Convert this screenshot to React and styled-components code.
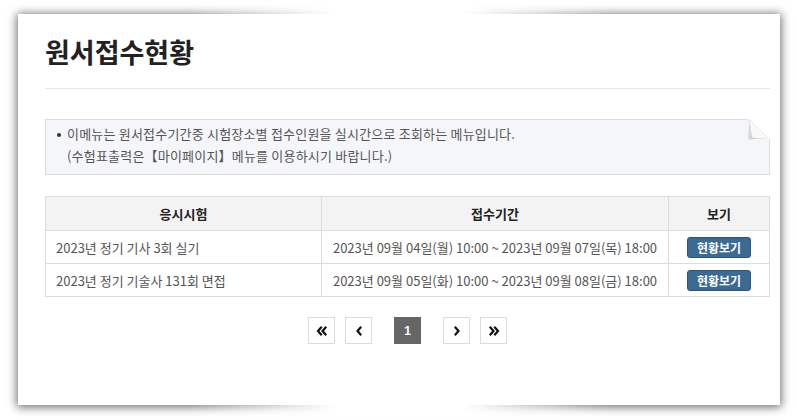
import React from "react";
import styled, { createGlobalStyle } from "styled-components";

const GlobalStyle = createGlobalStyle`
  html, body {
    margin: 0;
    padding: 0;
    background: #fff;
  }
  body {
    font-family: "Noto Sans CJK KR", "Noto Sans", sans-serif;
    color: #555;
  }
`;

const Stage = styled.div`
  width: 797px;
  height: 420px;
  box-sizing: border-box;
  padding: 14px 17px 15px 18px;
`;

const Panel = styled.div`
  position: relative;
  height: 100%;
  background: #fff;
  box-shadow: 0 1px 9px 1px rgba(0, 0, 0, 0.6);
  padding: 0 10px 0 27px;
  box-sizing: border-box;

  /* soften the shadow in the middle of the top and bottom edges */
  &::before,
  &::after {
    content: "";
    position: absolute;
    left: 22%;
    right: 22%;
    height: 14px;
    background: linear-gradient(
      to right,
      rgba(255, 255, 255, 0),
      #fff 35%,
      #fff 65%,
      rgba(255, 255, 255, 0)
    );
  }
  &::before {
    top: -14px;
  }
  &::after {
    bottom: -14px;
  }
`;

const Header = styled.div`
  padding: 22px 0 21px;
  border-bottom: 1px solid #e6e6e6;
`;

const Title = styled.h1`
  margin: 0;
  font-size: 27px;
  line-height: 31px;
  font-weight: 700;
  color: #222;
`;

const Notice = styled.div`
  position: relative;
  margin-top: 30px;
  background: #f5f6fa;
  border: 1px solid #dcdcdc;
  padding: 3px 12px 7px 11px;
  font-size: 13px;
  line-height: 22px;
  letter-spacing: 0.2px;
  color: #555;
  display: flex;
  align-items: flex-start;
  gap: 6px;
`;

const Bullet = styled.span`
  flex: none;
  width: 4px;
  height: 4px;
  margin-top: 10px;
  border-radius: 50%;
  background: #333;
`;

const Fold = styled.svg`
  position: absolute;
  top: -1px;
  right: -1px;
  width: 22px;
  height: 22px;
`;

const Table = styled.table`
  margin-top: 21px;
  width: 100%;
  border-collapse: collapse;
  font-size: 13px;
`;

const Th = styled.th`
  height: 33px;
  background: #f3f3f3;
  border: 1px solid #dcdcdc;
  font-weight: 700;
  color: #222;
  width: ${(p) => p.$w}px;
  padding: 0;
`;

const Td = styled.td`
  height: 32px;
  border: 1px solid #dcdcdc;
  color: #555;
  padding: 0 ${(p) => (p.$left ? "10px" : "0")};
  text-align: ${(p) => (p.$left ? "left" : "center")};
`;

const ViewButton = styled.button`
  width: 64px;
  height: 21px;
  padding: 0;
  border: 1px solid #2d5577;
  border-radius: 3px;
  background: #3b6a93;
  color: #fff;
  font-family: inherit;
  font-size: 12px;
  font-weight: 700;
  cursor: pointer;
  vertical-align: middle;
`;

const Pager = styled.div`
  margin-top: 20px;
  display: flex;
  justify-content: center;
  align-items: center;
  gap: 10px;
`;

const PageBtn = styled.button`
  width: 27px;
  height: 27px;
  box-sizing: border-box;
  padding: 0;
  display: flex;
  align-items: center;
  justify-content: center;
  border: 1px solid ${(p) => (p.$active ? "#666" : "#dcdcdc")};
  background: ${(p) => (p.$active ? "#666" : "#fff")};
  color: #fff;
  font-family: "Liberation Sans", sans-serif;
  font-weight: 700;
  font-size: 12px;
  margin: ${(p) => (p.$active ? "0 12px" : "0")};
  cursor: pointer;
`;

const Chevron = ({ dir, double }) => {
  const flip = dir === "right" ? "scale(-1,1) translate(-12,0)" : undefined;
  return (
    <svg width="12" height="12" viewBox="0 0 12 12">
      <g transform={flip} fill="none" stroke="#111" strokeWidth="2.2" strokeLinecap="square">
        {double ? (
          <>
            <polyline points="5,2.5 2,6 5,9.5" />
            <polyline points="9.5,2.5 6.5,6 9.5,9.5" />
          </>
        ) : (
          <polyline points="7.5,2.5 4.5,6 7.5,9.5" />
        )}
      </g>
    </svg>
  );
};

const rows = [
  {
    name: "2023년 정기 기사 3회 실기",
    period: "2023년 09월 04일(월) 10:00 ~ 2023년 09월 07일(목) 18:00",
  },
  {
    name: "2023년 정기 기술사 131회 면접",
    period: "2023년 09월 05일(화) 10:00 ~ 2023년 09월 08일(금) 18:00",
  },
];

export default function App() {
  return (
    <>
      <GlobalStyle />
      <Stage>
        <Panel>
          <Header>
            <Title>원서접수현황</Title>
          </Header>

          <Notice>
            <Bullet />
            <div>
              이메뉴는 원서접수기간중 시험장소별 접수인원을 실시간으로 조회하는 메뉴입니다.
              <br />
              (수험표출력은【마이페이지】메뉴를 이용하시기 바랍니다.)
            </div>
            <Fold viewBox="0 0 22 22">
              <polygon points="0,0 22,0 22,21" fill="#fff" />
              <line x1="1" y1="1" x2="21" y2="20" stroke="#dcdcdc" strokeWidth="1" />
              <path d="M2 1 Q0 12 0.5 21 Q11 19 21 20 Z" fill="#d6d6d6" />
              <path d="M2 1 Q2.5 12 4.5 18.5 Q12 19 21 20 Z" fill="#f9f9f9" />
            </Fold>
          </Notice>

          <Table>
            <thead>
              <tr>
                <Th $w={275}>응시시험</Th>
                <Th $w={346}>접수기간</Th>
                <Th>보기</Th>
              </tr>
            </thead>
            <tbody>
              {rows.map((row, i) => (
                <tr key={i}>
                  <Td $left>{row.name}</Td>
                  <Td>{row.period}</Td>
                  <Td>
                    <ViewButton>현황보기</ViewButton>
                  </Td>
                </tr>
              ))}
            </tbody>
          </Table>

          <Pager>
            <PageBtn aria-label="first">
              <Chevron double />
            </PageBtn>
            <PageBtn aria-label="prev">
              <Chevron />
            </PageBtn>
            <PageBtn $active>1</PageBtn>
            <PageBtn aria-label="next">
              <Chevron dir="right" />
            </PageBtn>
            <PageBtn aria-label="last">
              <Chevron dir="right" double />
            </PageBtn>
          </Pager>
        </Panel>
      </Stage>
    </>
  );
}
